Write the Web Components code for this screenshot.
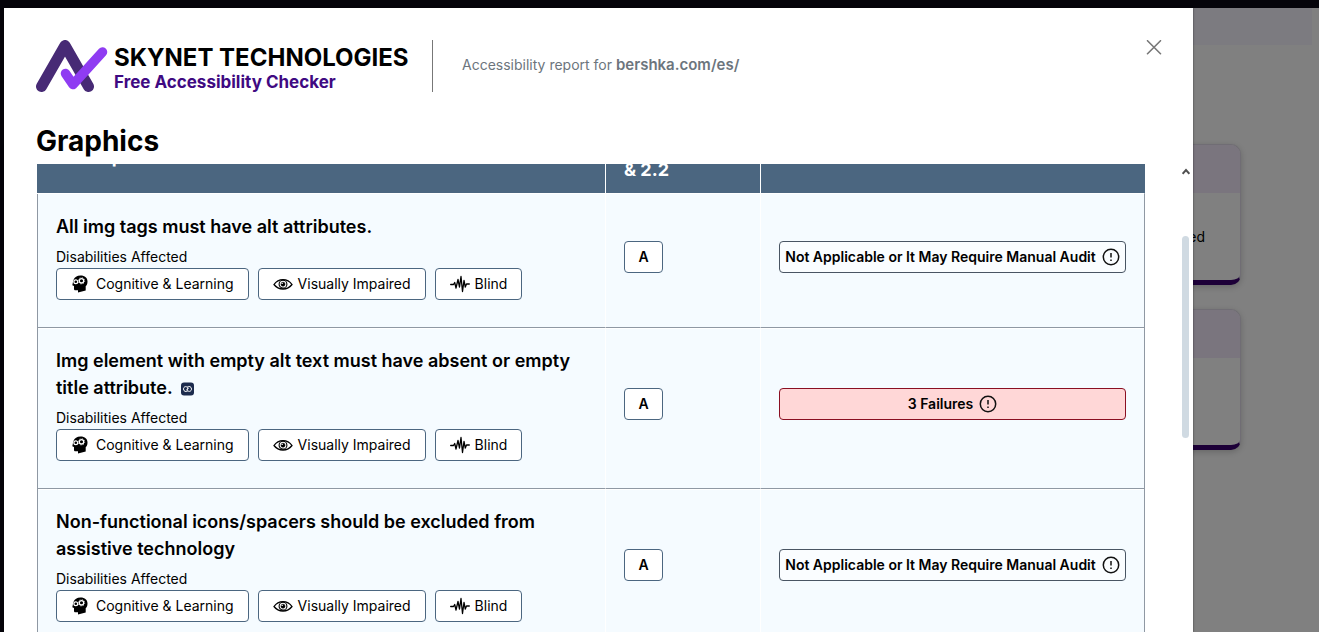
<!DOCTYPE html>
<html lang="en">
<head>
<meta charset="utf-8">
<title>Accessibility report</title>
<style>
html, body { height: 100%; }
body { margin: 0; overflow: hidden; background: #808080; font-family: Inter, "Liberation Sans", sans-serif; color: #000; }
</style>
</head>
<body>
<report-page></report-page>

<template id="report-page">
<style>
:host { display: flex; flex-direction: column; position: relative; height: 100%; overflow: hidden; }
.top { flex: none; height: 8px; background: #05040a; }
.back { flex: 1; padding-right: 7px; border-left: 4px solid #05040a; }
.band { height: 37px; background: #7c7b80; margin-bottom: 99px; }
.cards { display: grid; gap: 24px; padding-right: 71px; }
report-drawer { position: absolute; top: 8px; bottom: 0; left: 4px; right: 126px; }
</style>
<div class="top"></div>
<div class="back">
  <div class="band"></div>
  <div class="cards">
    <summary-card>ed</summary-card>
    <summary-card></summary-card>
  </div>
</div>
<report-drawer>
  <report-header slot="header" site="bershka.com/es/"></report-header>
  <rule-table></rule-table>
</report-drawer>
</template>

<template id="summary-card">
<style>
:host { display: flex; flex-direction: column; box-sizing: border-box; height: 141px; overflow: hidden; border: 1px solid #706d74; border-bottom: 5px solid #1d0038; border-radius: 10px; background: #808080; box-shadow: 0 2px 6px #0003; }
.head { height: 48px; background: #7a757e; }
.body { flex: 1; display: flex; align-items: center; justify-content: flex-end; padding-right: 35px; font-size: 14px; }
</style>
<div class="head"></div>
<div class="body"><slot></slot></div>
</template>

<template id="report-drawer">
<style>
:host { display: flex; flex-direction: column; box-sizing: border-box; padding: 32px 0 0 32px; background: #fff; box-shadow: 0 0 2px #0008; }
h2 { flex: none; margin: 30px 0 4px; font-size: 28px; line-height: 38px; font-weight: 700; }
.main { flex: 1; min-height: 0; display: flex; justify-content: space-between; }
.scroll { flex: 1; min-width: 0; overflow-y: auto; scrollbar-width: none; padding-left: 1px; }
.bar { flex: none; width: 8px; margin: 0 3px 0 37px; display: flex; flex-direction: column; gap: 60px; }
.bar svg { display: block; margin-top: 4px; }
.thumb { height: 202px; margin-top: 1px; width: 7px; border-radius: 4px; background: #d0dae2; }
</style>
<slot name="header"></slot>
<h2>Graphics</h2>
<div class="main">
  <div class="scroll"><slot></slot></div>
  <div class="bar" aria-hidden="true">
    <svg width="8" height="7" viewBox="0 0 8 7"><path d="M.6 5.800 4 2l3.400 3.800" fill="none" stroke="#505050" stroke-width="2"/></svg>
    <div class="thumb"></div>
  </div>
</div>
</template>

<template id="report-header">
<style>
:host { display: flex; align-items: flex-start; flex: none; padding-right: 31px; }
.logo { display: flex; gap: 6px; color: inherit; text-decoration: none; width: 397px; box-sizing: border-box; height: 52px; border-right: 1px solid #777; }
.logo svg { flex: none; }
.name { display: block; margin-top: 3px; font-size: 24px; line-height: 29px; font-weight: 700; white-space: nowrap; }
.sub { display: block; font-size: 17px; line-height: 20px; font-weight: 700; color: #3f0a82; white-space: nowrap; }
p { flex: 1; margin: 0 0 0 29px; line-height: 50px; font-size: 14px; color: #6c757d; }
strong { font-size: 15px; font-weight: 600; }
button { width: 16px; height: 16px; padding: 0; border: 0; background: none; }
button svg { display: block; }
</style>
<a class="logo" href="#">
  <svg width="72" height="53" viewBox="0 0 72 53" fill="none" stroke-linecap="round" stroke-linejoin="round" aria-hidden="true">
    <path d="M5.500 46.500 29 5.500 52.500 46.500" stroke="#472a75" stroke-width="11"/>
    <path d="M29.500 33.500 37 44.500 66.500 12" stroke="#8f3cf2" stroke-width="9.500"/>
  </svg>
  <span><span class="name">SKYNET TECHNOLOGIES</span><span class="sub">Free Accessibility Checker</span></span>
</a>
<p>Accessibility report for <strong></strong></p>
<button type="button" aria-label="Close">
  <svg width="16" height="16" viewBox="0 0 16 16"><path d="M1.500 .7 14.500 13.700M14.500 .7 1.500 13.700" stroke="#777" stroke-width="1.600" stroke-linecap="round"/></svg>
</button>
</template>

<template id="rule-table">
<style>
:host { display: block; }
table { width: 100%; table-layout: fixed; border-collapse: separate; border-spacing: 0; }
.c1 { width: 569px; } .c2 { width: 155px; }
th { box-sizing: border-box; height: 75px; padding: 10px 18px; background: #4b6680; border-right: 1px solid #fff; border-bottom: 1px solid #fff; color: #fff; font-size: 18px; line-height: 27px; text-align: left; }
th:last-child { border-right-color: #4b6680; }
td { padding: 19px 18px 27px; background: #f5fbff; border-right: 1px solid #fff; border-bottom: 1px solid #8f98a3; vertical-align: middle; }
td:first-child { border-left: 1px solid #8f98a3; vertical-align: top; }
td:last-child { border-right-color: #8f98a3; }
tbody tr + tr td { box-shadow: inset 0 1px #fff; }
h3 { margin: 0 0 6px; font-size: 18px; line-height: 27px; font-weight: 600; }
h3 a { display: inline-block; margin-left: 4px; vertical-align: -2px; line-height: 14px; }
h3 svg { display: block; }
.label { margin: 0; font-size: 14px; line-height: 22px; }
.chips { display: flex; gap: 9px; margin: 0; padding: 0; list-style: none; }
.chips li { display: flex; }
</style>
<table>
  <colgroup><col class="c1"><col class="c2"><col></colgroup>
  <thead><tr><th>Description</th><th>WCAG 2.1 &amp;&nbsp;2.2</th><th></th></tr></thead>
  <tbody></tbody>
</table>
</template>

<template id="disability-chip">
<style>
:host { display: flex; align-items: center; gap: 5px; box-sizing: border-box; height: 32px; padding: 0 14px; border: 1px solid #4b6680; border-radius: 4px; background: #fff; font-size: 14px; line-height: 20px; white-space: nowrap; }
svg { flex: none; }
</style>
<span id="icon"></span><slot></slot>
</template>

<template id="level-badge">
<style>
:host { display: flex; align-items: center; justify-content: center; box-sizing: border-box; width: 39px; height: 32px; border: 1px solid #4b6680; border-radius: 4px; background: #fff; font-size: 14px; line-height: 20px; font-weight: 600; }
</style>
<slot></slot>
</template>

<template id="status-button">
<style>
:host { display: block; }
button { display: flex; align-items: center; justify-content: center; gap: 6px; width: 100%; height: 32px; padding: 0 4px; border: 1px solid #495563; border-radius: 4px; background: #fafdff; color: #000; font: 600 14px/20px Inter, "Liberation Sans", sans-serif; white-space: nowrap; }
:host([fail]) button { border-color: #8a0f22; background: #ffd7d7; }
svg { flex: none; }
</style>
<button type="button"><slot></slot>
  <svg width="18" height="18" viewBox="0 0 18 18" aria-hidden="true"><circle cx="9" cy="9" r="7.700" fill="none" stroke="#111" stroke-width="1.500"/><path d="M9 5v4.500M9 11.500v1.500" stroke="#111" stroke-width="1.500"/></svg>
</button>
</template>

<script>
const ICONS = {
  head: '<svg width="20" height="18" viewBox="0 0 20 18" style="display:block"><path d="M9.500 .5c4.500 0 7 2.500 7 6 0 2.500-.8 3.600-1.800 4.800V15.500L7 17.500V15.300H4.500C3.500 15.300 3 14.800 3 14V11L1.300 10.300C1.800 8.500 1.800 7 2.500 5 3.500 2 6 .5 9.500 .5z"/><circle cx="4.800" cy="6.800" r="1.900" fill="none" stroke="#fff" stroke-width="1.200"/><circle cx="10.500" cy="5.800" r="2.200" fill="none" stroke="#fff" stroke-width="1.300"/><circle cx="10.500" cy="5.800" r="3.200" fill="none" stroke="#fff" stroke-width=".8" stroke-dasharray="1 1.500"/></svg>',
  eye: '<svg width="20" height="18" viewBox="0 0 20 18" style="display:block" fill="none" stroke="#000" stroke-width="1.300"><path d="M1 9.500C5.500 3 14.500 3 19 9.500 14.500 15.500 5.500 15.500 1 9.500z"/><circle cx="10" cy="9.200" r="3.900" stroke-width="1.100"/><circle cx="10" cy="9.200" r="2" fill="#000" stroke-width=".6"/><circle cx="9.200" cy="8.400" r=".7" fill="#fff" stroke="none"/></svg>',
  wave: '<svg width="20" height="18" viewBox="0 0 20 18" style="display:block" fill="none" stroke="#000" stroke-width="1.300" stroke-linejoin="round" stroke-linecap="round"><path d="M.7 9.500H3.500L4.700 7.500 6 13 8 4.500 9.500 12 11 1.500 12.500 16.500 14 5.500 15.300 12 16.500 9H19.300"/></svg>'
};
const LINK_ICON = '<svg width="13" height="14" viewBox="0 0 13 14"><rect width="13" height="13" y=".5" rx="3" fill="#1c2b4d"/><path d="M6.800 9C5.300 10.200 2.500 9.500 2.500 7S5.500 3.800 6.500 5.700c.6 1.200-.3 2.500-1.300 2.300M6.200 5C7.700 3.800 10.500 4.500 10.500 7S7.500 10.200 6.500 8.300C6 7.200 6.800 5.900 7.800 6" fill="none" stroke="#fff" stroke-width="1"/></svg>';
const RULES = [
  { title: 'All img tags must have alt attributes.', status: 'Not Applicable or It May Require Manual Audit' },
  { title: 'Img element with empty alt text must have absent or empty title attribute.', link: true, fail: true, status: '3 Failures' },
  { title: 'Non-functional icons/spacers should be excluded from assistive technology', status: 'Not Applicable or It May Require Manual Audit' }
];

class TemplateElement extends HTMLElement {
  connectedCallback() {
    if (this.shadowRoot) return;
    const root = this.attachShadow({ mode: 'open' });
    root.append(document.getElementById(this.localName).content.cloneNode(true));
    this.ready(root);
  }
  ready() {}
}

class DisabilityChip extends TemplateElement {
  ready(root) { root.getElementById('icon').innerHTML = ICONS[this.getAttribute('icon')]; }
}

class ReportHeader extends TemplateElement {
  ready(root) { root.querySelector('strong').textContent = this.getAttribute('site'); }
}

class RuleTable extends TemplateElement {
  ready(root) {
    root.querySelector('tbody').innerHTML = RULES.map(rule => `<tr>
      <td><h3>${rule.title}${rule.link ? ` <a href="#" aria-label="Rule link">${LINK_ICON}</a>` : ''}</h3>
        <p class="label">Disabilities Affected</p>
        <ul class="chips">
          <li><disability-chip icon="head">Cognitive &amp; Learning</disability-chip></li>
          <li><disability-chip icon="eye">Visually Impaired</disability-chip></li>
          <li><disability-chip icon="wave">Blind</disability-chip></li>
        </ul></td>
      <td><level-badge>A</level-badge></td>
      <td><status-button ${rule.fail ? 'fail' : ''}>${rule.status}</status-button></td>
    </tr>`).join('');
  }
}

class ReportDrawer extends TemplateElement {
  ready(root) {
    // Start with the header row partly scrolled away.
    requestAnimationFrame(() => { root.querySelector('.scroll').scrollTop = 45; });
  }
}

customElements.define('disability-chip', DisabilityChip);
customElements.define('level-badge', class extends TemplateElement {});
customElements.define('status-button', class extends TemplateElement {});
customElements.define('rule-table', RuleTable);
customElements.define('report-header', ReportHeader);
customElements.define('report-drawer', ReportDrawer);
customElements.define('summary-card', class extends TemplateElement {});
customElements.define('report-page', class extends TemplateElement {});
</script>
</body>
</html>
